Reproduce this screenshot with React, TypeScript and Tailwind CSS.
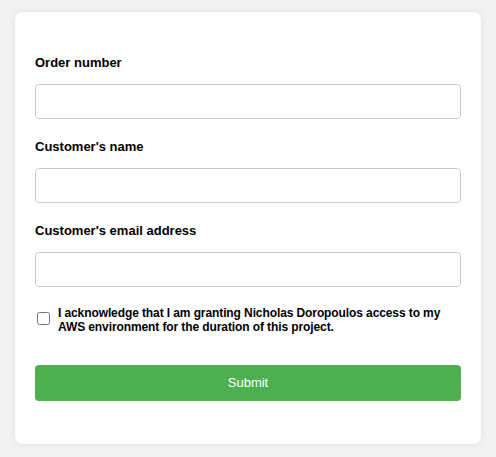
const fields = [
  { id: "order", label: "Order number", type: "text" },
  { id: "name", label: "Customer's name", type: "text" },
  { id: "email", label: "Customer's email address", type: "email" },
];

const App = () => {
  return (
    <div className="min-h-[457px] w-full bg-[#f2f2f2] pt-[12px] pl-[15px] pr-[15px] font-['Liberation_Sans',Arial,sans-serif]">
      <form className="w-[466px] bg-white rounded-lg shadow-[0_0_6px_rgba(0,0,0,0.08)] px-5 pt-[23px] pb-[43px]">
        {fields.map((f) => (
          <div key={f.id}>
            <label htmlFor={f.id} className="block mt-[18px] mb-[11px] text-[13px] leading-5 font-bold text-black">
              {f.label}
            </label>
            <input
              id={f.id}
              type={f.type}
              className="block w-full h-[35px] border border-[#ccc] rounded-[4px] px-2 text-sm outline-none"
            />
          </div>
        ))}
        <div className="flex items-center mt-[19px] h-[28px]">
          <input type="checkbox" className="w-[13px] h-[13px] ml-[2px] mr-[8px] shrink-0 -mt-[3px]" />
          <span className="text-[12px] leading-[14px] font-bold tracking-[-0.1px] text-black">
            I acknowledge that I am granting Nicholas Doropoulos access to my AWS environment for the duration of this project.
          </span>
        </div>
        <button
          type="button"
          className="block w-full h-[36px] mt-[31px] bg-[#4caf50] text-white text-[13px] rounded-[4px]"
        >
          Submit
        </button>
      </form>
    </div>
  );
};

export default App;
